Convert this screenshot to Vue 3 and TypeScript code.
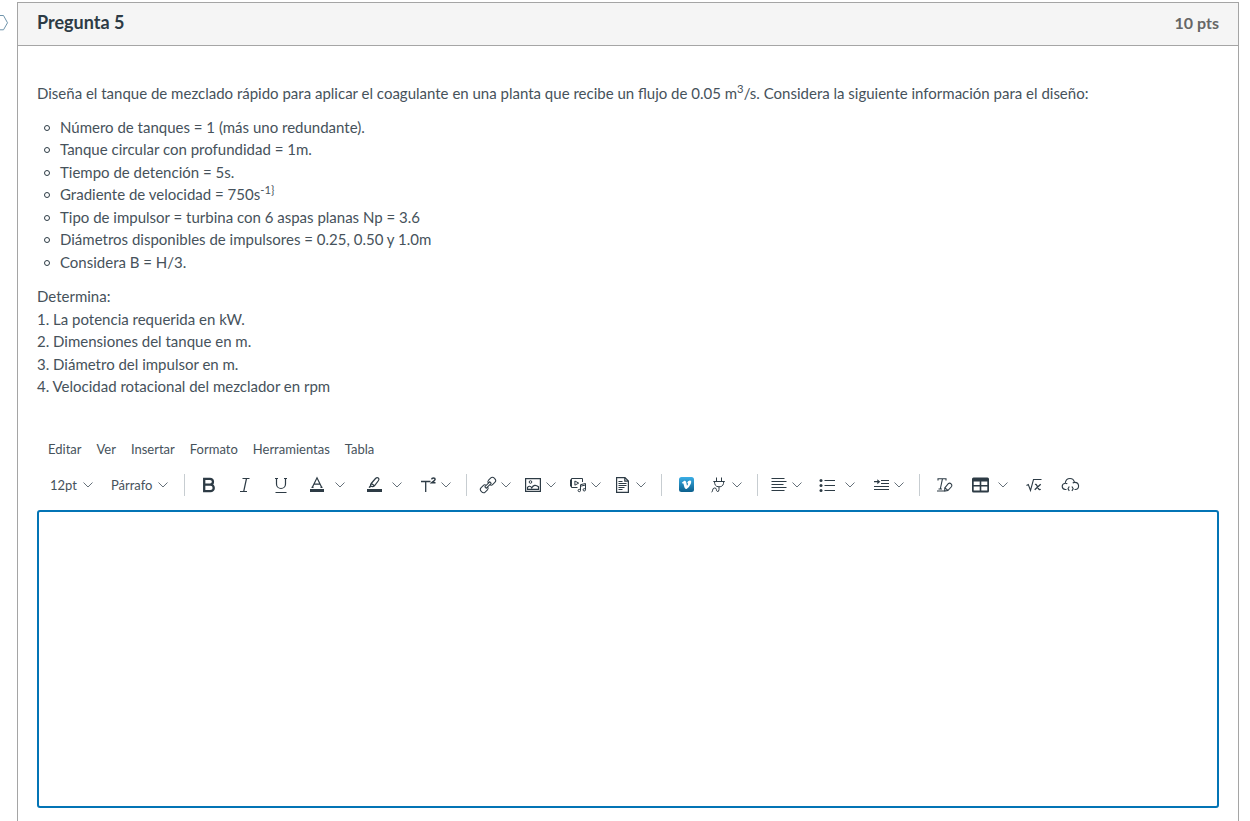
<script setup lang="ts">
interface Tool {
  id: string
  label: string
  kind: 'plain' | 'dropdown' | 'split'
}

const title = 'Pregunta 5'
const points = '10 pts'

const steps: string[] = [
  '1. La potencia requerida en kW.',
  '2. Dimensiones del tanque en m.',
  '3. Diámetro del impulsor en m.',
  '4. Velocidad rotacional del mezclador en rpm',
]

const menus: string[] = ['Editar', 'Ver', 'Insertar', 'Formato', 'Herramientas', 'Tabla']
const selects: string[] = ['12pt', 'Párrafo']

const groups: Tool[][] = [
  [
    { id: 'bold', label: 'Negrita', kind: 'plain' },
    { id: 'italic', label: 'Cursiva', kind: 'plain' },
    { id: 'underline', label: 'Subrayado', kind: 'plain' },
    { id: 'color', label: 'Color de texto', kind: 'split' },
    { id: 'highlight', label: 'Color de fondo', kind: 'split' },
    { id: 'super', label: 'Superíndice', kind: 'dropdown' },
  ],
  [
    { id: 'link', label: 'Enlaces', kind: 'dropdown' },
    { id: 'image', label: 'Imágenes', kind: 'dropdown' },
    { id: 'media', label: 'Multimedia', kind: 'dropdown' },
    { id: 'doc', label: 'Documentos', kind: 'dropdown' },
  ],
  [
    { id: 'vimeo', label: 'Vimeo', kind: 'plain' },
    { id: 'plug', label: 'Aplicaciones', kind: 'dropdown' },
  ],
  [
    { id: 'align', label: 'Alinear', kind: 'dropdown' },
    { id: 'list', label: 'Lista', kind: 'split' },
    { id: 'indent', label: 'Sangría', kind: 'dropdown' },
  ],
  [
    { id: 'clear', label: 'Borrar formato', kind: 'plain' },
    { id: 'table', label: 'Tabla', kind: 'split' },
    { id: 'math', label: 'Ecuación', kind: 'plain' },
    { id: 'embed', label: 'Insertar código', kind: 'plain' },
  ],
]

const icons: Record<string, string> = {
  bold: '<path stroke-width="2.3" d="M3.2 1.8H9a2.9 2.9 0 0 1 0 5.9H3.2zM3.2 7.7h6.3a3.2 3.2 0 0 1 0 6.5H3.2z"/>',
  italic: '<path stroke-width="1.2" d="M5.5 1.5h7M3 14.5h7M9.5 1.5l-2.800 13"/>',
  underline: '<path stroke-width="1.2" d="M2 1.5h3M11 1.5h3M3.5 1.5v5.5a4.5 4.5 0 0 0 9 0V1.5M2.5 15.5h11"/>',
  color: '<path stroke-width="1.2" d="M3.5 10 8 .8 12.5 10M5 7.2h6M2.5 10.3h2M11.5 10.3h2"/><path fill="currentColor" stroke="none" d="M1 12h14v3H1z"/>',
  highlight: '<path stroke-width="1.2" d="M5.2 6.5 9.5 1.5Q11-.1 12.3 1t.2 2.5L8.5 8.8Q7 10 5.3 9.3L3 10.5 4.6 8.5Q4.3 7.4 5.2 6.5zM5.3 6.5 8.5 8.8"/><path fill="currentColor" stroke="none" d="M1 12h15v3H1z"/>',
  super: '<path stroke-width="1.3" d="M1 4.5h9.5M5.7 4.5V15"/><path stroke-width="1.5" d="M11.6 2.3q.2-1.400 1.900-1.400 1.600 0 1.600 1.300 0 .9-3.300 3.500h3.700"/>',
  link: '<g transform="rotate(-45 8 8)"><path d="M6.500 6.800Q6 5 4.200 5H1Q-1.300 5-1.300 8T1 11H4.200Q6 11 6.500 9.200M9.500 6.800Q10 5 11.800 5H15Q17.300 5 17.300 8T15 11H11.800Q10 11 9.500 9.200M4.500 7h7v2h-7z"/></g>',
  image: '<path stroke-width="1.2" d="M.6 1.6h14.800v12.800H.6zM2.500 12.400v-2q2.300-2.500 4.300.4 2.400-4.400 6.700-1v2.600z"/><circle cx="5.5" cy="5" r="1.300"/>',
  media: '<path d="M7.500 10.500H1.500V1.500h11v3.500M.5 2.500v7M4.900 4v4.200L8.700 6.100z"/><path d="M10.500 13.300V7.700l5-1.200v6M10.500 9.200l5-1.200"/><circle cx="9.300" cy="13.500" r="1.200"/><circle cx="14.300" cy="12.800" r="1.200"/>',
  doc: '<path stroke-width="1.2" d="M1.600.6h8.400l3.400 3.400v11.400H1.600zM9.800.6v3.600h3.600"/><path stroke-width="1.2" d="M3.500 4.500h4M3.500 6.500h8M3.500 8.500h8M3.500 10.500h6M3.500 12.500h4"/>',
  vimeo: '<defs><linearGradient id="vimeo-fill" x1="0" y1="0" x2="0" y2="1"><stop stop-color="#3aaee6"/><stop offset="1" stop-color="#0b5f8c"/></linearGradient></defs><rect x="1" y="0" width="15" height="15" rx="2.5" fill="url(#vimeo-fill)" stroke="none"/><path fill="#fff" stroke="none" d="M3.800 5.800 6.300 3.800Q7.800 3.200 8.200 5.200L9 8.800Q10.300 7.300 10.100 6.400 9.800 5.700 8.900 6.200 9.900 3.400 12 3.600 14 3.800 12.800 6.700 11.500 9.800 8.900 11.800 7.100 12.600 6.400 10.200L5.400 6.600Q5.100 5.900 4.300 6.500z"/>',
  plug: '<path d="M5.500.5V4M10.500.5V4M2.300 4.500h11.500M3.500 4.500q0 4.800 3.500 5.200h2.200q3.500-.4 3.500-5.200M8 10v2.500Q7.900 15 6.300 14.500 5.400 14 5.400 12.500T3.600 11 1.600 13.200Q1.600 15 .5 15"/>',
  align: '<path stroke-width="1.2" d="M.5 1.500h13M.5 4.500h15M.5 7.500h12M.5 10.500h15M.5 13.500h13"/>',
  list: '<g fill="currentColor" stroke="none"><circle cx="2" cy="3.500" r="1.500"/><circle cx="2" cy="8.500" r="1.500"/><circle cx="2" cy="13.500" r="1.500"/></g><path stroke-width="1.2" d="M5.500 3.500H16M5.500 8.500H16M5.500 13.500H16"/>',
  indent: '<path stroke-width="1.2" d="M8 3.500h8M8 6.500h8M1 9.500h15M1 12.500h15M1 4.700h5"/><path fill="currentColor" stroke="none" d="M4.300 2.200 7.300 4.700 4.300 7.200z"/>',
  clear: '<path stroke-width="1.1" d="M2 3.500V1.700h8v1.800M6.500 1.700 4.300 12M2.500 12h3.500M1 14h9.500M8.800 10.800 12.500 6.500q1.300-.9 2.600.4t.5 2.600L11.900 13.500l-3.200.5zM9 10.800l2.800 2.600"/>',
  table: '<path fill="currentColor" fill-rule="evenodd" stroke="none" d="M1.500.5h14a1.500 1.500 0 0 1 1.500 1.500v12a1.500 1.500 0 0 1-1.500 1.500h-14A1.500 1.500 0 0 1 0 14V2A1.500 1.500 0 0 1 1.500.5zM1.700 4.500V8h6V4.500zM9.300 4.500V8h6V4.500zM1.700 9.500v4h6v-4zM9.300 9.500v4h6v-4z"/>',
  math: '<path stroke-width="1.1" d="M.5 8.500 2.300 7.500 4.500 13.500 7.500 2.500h8"/><path stroke-width="1.3" d="M9 7.500q1-.6 1.700.7l2 3.600q.8 1.300 2 .5M14.700 7.300 8.700 12.800"/>',
  embed: '<path stroke-width="1.1" d="M4.500 12.500H3.300Q.2 12.200.2 9.300q0-2.700 3-3.100Q3.800 1.500 8 1.500q3.600 0 4.500 3.900 3.800-.2 4.100 3.500-.1 3.600-3.400 3.600h-.7M3.200 6.200q1.400-.1 2.100.8M12.500 5.400q-1 0-1.800.7M7.300 9.500 6 11.700l1.300 2.200M9.900 9.500l1.300 2.200-1.300 2.200"/>',
}
</script>

<template>
  <main class="page">
    <svg class="flag" viewBox="0 0 9 16" aria-hidden="true">
      <path d="M0 .5H3.500L7.500 7.800 3.500 14.800H0" />
    </svg>
    <section class="card">
      <header class="head">
        <h1 class="title">{{ title }}</h1>
        <span class="points">{{ points }}</span>
      </header>
      <div class="body">
        <p class="para">
          Diseña el tanque de mezclado rápido para aplicar el coagulante en una planta que recibe un flujo de 0.05 m<sup>3</sup>/s. Considera la siguiente información para el diseño:
        </p>
        <ul class="facts">
          <li>Número de tanques = 1 (más uno redundante).</li>
          <li>Tanque circular con profundidad = 1m.</li>
          <li>Tiempo de detención = 5s.</li>
          <li>Gradiente de velocidad = 750s<sup>-1}</sup></li>
          <li>Tipo de impulsor = turbina con 6 aspas planas Np = 3.6</li>
          <li>Diámetros disponibles de impulsores = 0.25, 0.50 y 1.0m</li>
          <li>Considera B = H/3.</li>
        </ul>
        <p class="para">
          Determina:<template v-for="step in steps" :key="step"><br />{{ step }}</template>
        </p>

        <div class="editor">
          <nav class="menubar">
            <button v-for="menu in menus" :key="menu" type="button" class="menu">{{ menu }}</button>
          </nav>
          <div class="toolbar" role="toolbar" aria-label="Formato">
            <div class="group selects">
              <button v-for="item in selects" :key="item" type="button" class="choice">
                {{ item }}
                <svg class="chevron" viewBox="0 0 10 6"><path d="M.5.5 5 5 9.500.5" /></svg>
              </button>
            </div>
            <div v-for="(group, index) in groups" :key="index" class="group ruled">
              <template v-for="tool in group" :key="tool.id">
                <button type="button" class="tool" :class="tool.kind" :aria-label="tool.label">
                  <svg class="icon" viewBox="0 0 17 16" v-html="icons[tool.id]"></svg>
                  <svg v-if="tool.kind === 'dropdown'" class="chevron" viewBox="0 0 10 6"><path d="M.5.5 5 5 9.500.5" /></svg>
                </button>
                <button v-if="tool.kind === 'split'" type="button" class="more" :aria-label="tool.label + ': opciones'">
                  <svg class="chevron" viewBox="0 0 10 6"><path d="M.5.5 5 5 9.500.5" /></svg>
                </button>
              </template>
            </div>
          </div>
          <textarea class="answer" aria-label="Respuesta"></textarea>
        </div>
      </div>
    </section>
  </main>
</template>

<style>
body {
  margin: 0;
  background: #fff;
}
</style>

<style scoped>
.page {
  position: relative;
  box-sizing: border-box;
  min-height: 100vh;
  display: flex;
  padding: 2px 11px 0 17px;
  font-family: Lato, "Liberation Sans", sans-serif;
  font-size: 15px;
  line-height: 1.5;
  color: #2d3b45;
}
.flag {
  position: absolute;
  left: 0;
  top: 15px;
  width: 9px;
  height: 16px;
  fill: none;
  stroke: #6f94ab;
}
.card {
  flex: 1;
  min-width: 0;
  border: 1px solid #a5a5a5;
  border-bottom: 0;
}
.head {
  display: flex;
  align-items: flex-start;
  justify-content: space-between;
  height: 42px;
  padding: 0 19px;
  background: #f5f5f5;
  border-bottom: 1px solid #a5a5a5;
}
.title {
  margin: 0;
  font-size: 18px;
  line-height: 38px;
  font-weight: 700;
}
.points {
  font-size: 16px;
  line-height: 40px;
  font-weight: 700;
  color: #666;
}
.body {
  padding: 36px 19px 13px;
}
.para,
.facts {
  color: #46525b;
}
.para {
  margin: 0;
}
.facts {
  margin: 11px 0 12px;
  padding-left: 23px;
  list-style: none;
}
.facts li::before {
  content: "";
  display: inline-block;
  box-sizing: border-box;
  width: 6px;
  height: 6px;
  margin: 0 10px 0 -16px;
  border: 1px solid #2d3b45;
  border-radius: 50%;
  vertical-align: 2px;
}
sup {
  position: relative;
  top: -0.5em;
  font-size: 75%;
  line-height: 0;
  vertical-align: baseline;
}
.editor {
  margin-top: 39px;
}
button {
  margin: 0;
  padding: 0;
  border: 0;
  background: none;
  color: inherit;
  font: inherit;
}
.menubar {
  display: flex;
  gap: 15px;
  padding: 0 11px;
  height: 24px;
}
.menu,
.choice {
  font-size: 13px;
  line-height: 24px;
  color: #46525b;
}
.toolbar {
  display: flex;
  align-items: center;
  height: 49px;
}
.group {
  display: flex;
  align-items: center;
  height: 22px;
}
.selects {
  gap: 18px;
  padding: 0 16px 0 13px;
}
.choice {
  display: flex;
  align-items: center;
  gap: 6px;
}
.ruled {
  padding: 0 8px 0 6px;
  border-left: 1px solid #c7cdd1;
}
.tool {
  display: flex;
  align-items: center;
  justify-content: center;
  width: 36px;
  height: 22px;
}
.tool.dropdown {
  width: 45px;
  gap: 4px;
}
.more {
  display: flex;
  align-items: center;
  width: 12px;
  height: 22px;
  margin-right: 9px;
}
.group:last-child .more {
  margin-right: 6px;
}
.icon {
  width: 17px;
  height: 16px;
  fill: none;
  stroke: currentColor;
  overflow: visible;
}
.chevron {
  width: 10px;
  height: 6px;
  fill: none;
  stroke: #66717a;
}
.answer {
  display: block;
  box-sizing: border-box;
  width: 100%;
  height: 298px;
  padding: 10px;
  border: 2px solid #0374b5;
  border-radius: 3px;
  outline: 0;
  resize: none;
  font: inherit;
}
</style>
